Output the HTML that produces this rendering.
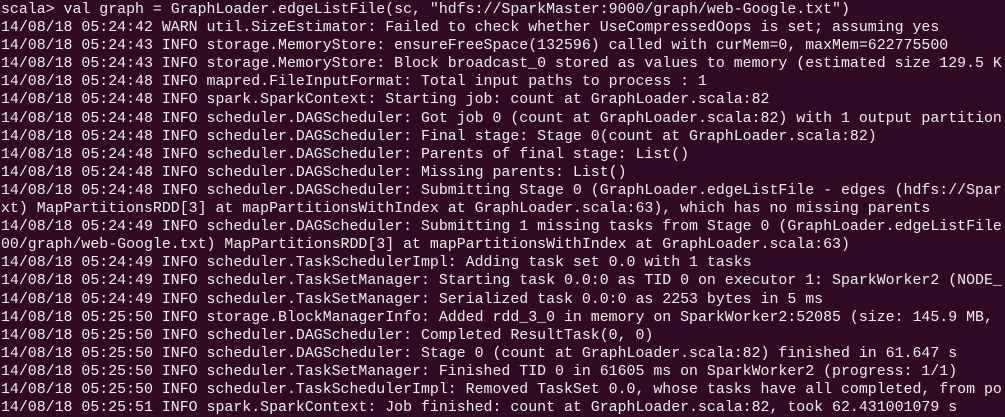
<!DOCTYPE html>
<html><head><meta charset="utf-8"><style>
html,body{margin:0;padding:0;background:#300a24;width:1005px;height:416px;overflow:hidden}
pre{margin:0;padding:0 0 0 1px;position:absolute;top:1px;left:0;font-family:"Liberation Mono","DejaVu Sans Mono",monospace;font-size:14.9px;line-height:18.1px;color:#eeeeec;white-space:pre}
</style></head><body><pre>scala&gt; val graph = GraphLoader.edgeListFile(sc, "hdfs://SparkMaster:9000/graph/web-Google.txt")
14/08/18 05:24:42 WARN util.SizeEstimator: Failed to check whether UseCompressedOops is set; assuming yes
14/08/18 05:24:43 INFO storage.MemoryStore: ensureFreeSpace(132596) called with curMem=0, maxMem=622775500
14/08/18 05:24:43 INFO storage.MemoryStore: Block broadcast_0 stored as values to memory (estimated size 129.5 K
14/08/18 05:24:48 INFO mapred.FileInputFormat: Total input paths to process : 1
14/08/18 05:24:48 INFO spark.SparkContext: Starting job: count at GraphLoader.scala:82
14/08/18 05:24:48 INFO scheduler.DAGScheduler: Got job 0 (count at GraphLoader.scala:82) with 1 output partition
14/08/18 05:24:48 INFO scheduler.DAGScheduler: Final stage: Stage 0(count at GraphLoader.scala:82)
14/08/18 05:24:48 INFO scheduler.DAGScheduler: Parents of final stage: List()
14/08/18 05:24:48 INFO scheduler.DAGScheduler: Missing parents: List()
14/08/18 05:24:48 INFO scheduler.DAGScheduler: Submitting Stage 0 (GraphLoader.edgeListFile - edges (hdfs://Spar
xt) MapPartitionsRDD[3] at mapPartitionsWithIndex at GraphLoader.scala:63), which has no missing parents
14/08/18 05:24:49 INFO scheduler.DAGScheduler: Submitting 1 missing tasks from Stage 0 (GraphLoader.edgeListFile
00/graph/web-Google.txt) MapPartitionsRDD[3] at mapPartitionsWithIndex at GraphLoader.scala:63)
14/08/18 05:24:49 INFO scheduler.TaskSchedulerImpl: Adding task set 0.0 with 1 tasks
14/08/18 05:24:49 INFO scheduler.TaskSetManager: Starting task 0.0:0 as TID 0 on executor 1: SparkWorker2 (NODE_
14/08/18 05:24:49 INFO scheduler.TaskSetManager: Serialized task 0.0:0 as 2253 bytes in 5 ms
14/08/18 05:25:50 INFO storage.BlockManagerInfo: Added rdd_3_0 in memory on SparkWorker2:52085 (size: 145.9 MB,
14/08/18 05:25:50 INFO scheduler.DAGScheduler: Completed ResultTask(0, 0)
14/08/18 05:25:50 INFO scheduler.DAGScheduler: Stage 0 (count at GraphLoader.scala:82) finished in 61.647 s
14/08/18 05:25:50 INFO scheduler.TaskSetManager: Finished TID 0 in 61605 ms on SparkWorker2 (progress: 1/1)
14/08/18 05:25:50 INFO scheduler.TaskSchedulerImpl: Removed TaskSet 0.0, whose tasks have all completed, from po
14/08/18 05:25:51 INFO spark.SparkContext: Job finished: count at GraphLoader.scala:82, took 62.431001079 s</pre></body></html>
